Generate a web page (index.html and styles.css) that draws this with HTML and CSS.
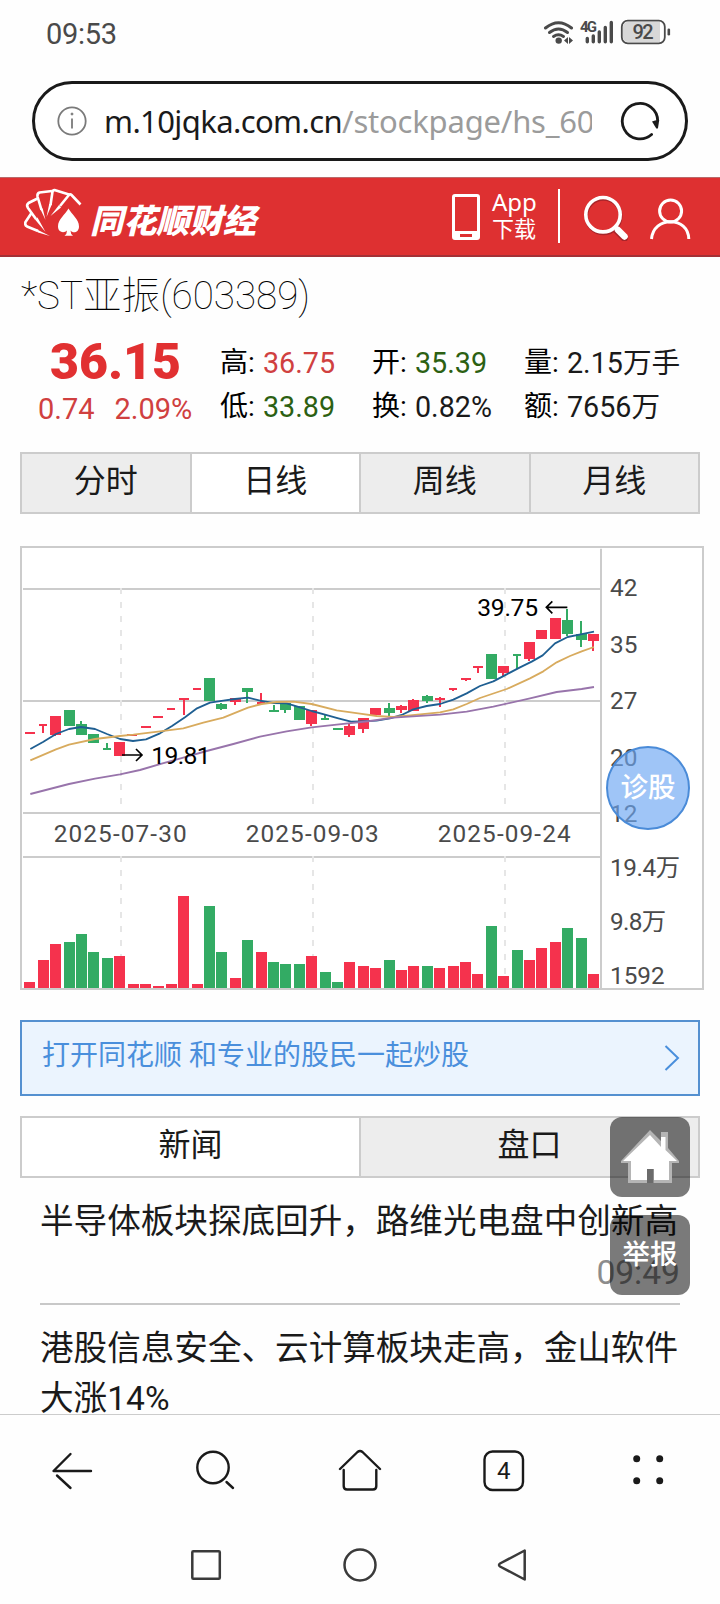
FILE: index.html
```html
<!DOCTYPE html>
<html lang="zh-CN">
<head>
<meta charset="utf-8">
<title>*ST亚振(603389)</title>
<link rel="stylesheet" href="styles.css">
</head>
<body>
<div class="phone">
  <div class="status">
    <span class="clock">09:53</span>
    <svg class="status-icons" width="130" height="28" viewBox="542 18 130 28">
      <g fill="none" stroke="#4a4a4a" stroke-width="3" stroke-linecap="round">
        <path d="M545.5 28Q558.500 17.500 571.500 28"/>
        <path d="M549.500 32.500Q558.500 25.500 567.500 32.500"/>
        <path d="M553.500 36.500Q558.500 33 563.500 36.500"/>
      </g>
      <circle cx="558.700" cy="40.600" r="3.200" fill="#4a4a4a"/>
      <path d="M564 40.500l4-3.500v7zM573 40.500l-4-3.500v7z" fill="#4a4a4a"/>
      <text x="580" y="32" class="net" textLength="17">4G</text>
      <g stroke="#4a4a4a" stroke-width="3.400" stroke-linecap="round">
        <path d="M587.300 38.500v3.300M593.300 36v5.800M599.300 32v9.800M605.300 27.500v14.300M611.300 22.500v19.300"/>
      </g>
      <rect x="621.800" y="20.700" width="43" height="22.600" rx="6" fill="#fff" stroke="#4a4a4a" stroke-width="1.800"/>
      <path d="M628 22h32v20h-32q-5 0-5-5V27q0-5 5-5z" fill="#d8d8d8"/>
      <rect x="667.500" y="28.500" width="2.600" height="7" rx="1.300" fill="#4a4a4a"/>
      <text x="632.500" y="39.300" class="battery" textLength="21">92</text>
    </svg>
  </div>

  <div class="address">
    <svg width="30" height="30" viewBox="0 0 30 30" fill="none" stroke="#7a7a7a" stroke-width="1.800">
      <circle cx="15" cy="15" r="13.700"/><path d="M15 12.500v10"/><circle cx="15" cy="8" r="1" fill="#7a7a7a" stroke-width="1"/>
    </svg>
    <div class="url">m.10jqka.com.cn<span>/stockpage/hs_603389</span></div>
    <svg class="reload" width="42" height="42" viewBox="0 0 42 42">
      <path d="M32.600 34.500A17.700 17.700 0 1 1 38.700 21" fill="none" stroke="#1a1a1a" stroke-width="2.800" stroke-linecap="round"/>
      <path d="M33 21.500q4-2 7.200-1.500l-1.200 8q-1 1.500-2 0z" fill="#1a1a1a"/>
    </svg>
  </div>

  <header class="site">
    <svg class="cards" width="58" height="50" viewBox="24 188 58 50">
      <g fill="none" stroke="#fff" stroke-width="2.600" stroke-linejoin="round">
        <path d="M31.500 213L25.500 222Q24.500 225 27 226.500L38 231"/>
        <path d="M37.500 198.500L28.500 203Q26 205 28 208L36 219"/>
        <path d="M52 191L39.500 192.500Q37 193.500 37.500 196.500L41.500 210"/>
        <path d="M69 194.500L54.500 190Q52.500 190 52.300 193L50.500 205"/>
        <path d="M80.500 204.500L71.500 195Q70 193.500 68.500 195.500L60 206"/>
      </g>
      <path d="M36 229L50 236L38 232.500zM35 219.500L45.500 232L37.500 217.500zM40.300 209L45.500 220L42.700 208.500zM49.200 204L46.500 217L52 204zM59 205L50.500 216L61 207.500z" fill="#fff"/>
      <path d="M68.500 208.500C72 215 79 219 79 226.500C79 233 72.500 233.500 70.500 230.500Q70.500 234 73 235.800H64.500Q67 234 67 230.500C64 233.500 58 232.500 58 226.500C58 219 65 215 68.500 208.500z" fill="#fff"/>
    </svg>
    <span class="brand">同花顺财经</span>
    <svg class="mobile" width="28" height="46" viewBox="0 0 28 46">
      <path fill="#fff" fill-rule="evenodd" d="M3 0h22q3 0 3 3v40q0 3-3 3H3q-3 0-3-3V3q0-3 3-3zM3 3v34h22V3zM8 40v3h12v-3z"/>
    </svg>
    <div class="download"><span class="app">App</span><span>下载</span></div>
    <i class="split"></i>
    <svg class="find" width="46" height="46" viewBox="583 195 46 46">
      <g fill="none" stroke="#a8252a" transform="translate(.5 1.200)"><circle cx="603" cy="215" r="17.200" stroke-width="3.600"/><path d="M616 229l8 8" stroke-width="7" stroke-linecap="round"/></g>
      <g fill="none" stroke="#fff"><circle cx="603" cy="214.700" r="17.200" stroke-width="3.600"/><path d="M614.500 226l4 4" stroke-width="4"/><path d="M618 230l6.500 6.500" stroke-width="6.500" stroke-linecap="round"/></g>
    </svg>
    <svg class="user" width="42" height="42" viewBox="650 198 42 42" fill="none" stroke="#fff" stroke-width="3">
      <circle cx="670.600" cy="211" r="11"/><path d="M651.500 239C652.500 227.500 661 221.700 670.600 221.700S688.500 227.500 688.800 239"/>
    </svg>
  </header>

  <main class="page">
    <h1 class="stock">*ST亚振(603389)</h1>

    <section class="quote">
      <div class="now">
        <strong>36.15</strong>
        <div class="change"><span>0.74</span><span>2.09%</span></div>
      </div>
      <dl class="facts">
        <div><dt>高:</dt><dd class="up">36.75</dd></div>
        <div><dt>开:</dt><dd class="down">35.39</dd></div>
        <div><dt>量:</dt><dd>2.15万手</dd></div>
        <div><dt>低:</dt><dd class="down">33.89</dd></div>
        <div><dt>换:</dt><dd>0.82%</dd></div>
        <div><dt>额:</dt><dd>7656万</dd></div>
      </dl>
    </section>

    <nav class="tabs period"><a>分时</a><a class="on">日线</a><a>周线</a><a>月线</a></nav>

    <section class="chart">
      <svg width="684" height="444" viewBox="30 18 2052 1332">
        <g class="grid">
          <rect x="33" y="21" width="2046" height="1326"/>
          <path d="M39 147H1770M39 483H1770M39 819H1770M39 951H1770M1773 26V1344"/>
        </g>
        <path class="dash" d="M333 144V804M909 144V804M1485 144V804M333 948V1340M909 948V1340M1485 948V1340"/>
        <g id="candles"></g>
        <g id="volumes"></g>
        <g class="average">
          <polyline stroke="#1f5f92" points="61,627 99,606 138,582 177,567 213,561 255,567 291,582 330,597 369,603 408,598 450,580 486,558 525,532 561,505 600,488 640,482 675,477 714,473 750,482 790,489 830,490 870,502 905,513 945,524 985,535 1023,545 1050,544 1100,542 1140,535 1175,525 1210,508 1250,498 1290,492 1330,479 1370,460 1410,438 1450,424 1490,403 1530,382 1565,365 1598,346 1635,310 1673,291 1712,283 1752,275"/>
          <polyline stroke="#d8ab5e" points="61,661 138,628 177,614 255,597 330,588 370,584 450,574 520,565 580,548 640,533 714,503 755,492 800,486 850,485 905,492 980,511 1050,521 1100,528 1150,531 1200,526 1290,517 1330,508 1370,492 1410,474 1490,447 1560,415 1600,394 1640,367 1680,348 1715,334 1752,321"/>
          <polyline stroke="#9874ab" points="61,762 177,732 255,716 330,703 390,690 455,671 520,653 590,633 670,612 750,590 830,574 905,562 980,554 1080,543 1150,533 1290,524 1370,515 1450,500 1560,475 1640,456 1715,447 1752,441"/>
        </g>
        <g class="mark">
          <path d="M336 645H395M378 627L396 645L378 663M1672 202H1610M1627 184L1609 202L1627 220"/>
          <text x="424" y="671" textLength="178">19.81</text>
          <text x="1402" y="227" textLength="182">39.75</text>
        </g>
        <g class="label">
          <text x="131" y="905" textLength="399">2025-07-30</text>
          <text x="707" y="905" textLength="399">2025-09-03</text>
          <text x="1283" y="905" textLength="399">2025-09-24</text>
          <text x="1800" y="168">42</text><text x="1800" y="338">35</text><text x="1800" y="507">27</text>
          <text x="1800" y="677">20</text><text x="1800" y="847">12</text>
          <text x="1800" y="1008" textLength="210">19.4万</text><text x="1800" y="1170" textLength="168">9.8万</text><text x="1800" y="1332">1592</text>
        </g>
      </svg>
      <div class="diagnose">诊股</div>
    </section>

    <a class="promo"><span>打开同花顺 和专业的股民一起炒股</span>
      <svg width="16" height="28" viewBox="0 0 16 28" fill="none" stroke="#4a8fdc" stroke-width="2"><path d="M1.500 2L14 14L1.500 26"/></svg>
    </a>

    <nav class="tabs feed"><a class="on">新闻</a><a>盘口</a></nav>

    <ul class="news">
      <li>半导体板块探底回升，路维光电盘中创新高<time>09:49</time></li>
      <li>港股信息安全、云计算板块走高，金山软件大涨14%</li>
    </ul>
  </main>

  <div class="floats">
    <div class="float">
      <svg width="60" height="54" viewBox="0 0 60 54">
        <path fill="#b5b5b5" d="M30 0L41 11V2h7v16L59 31v2h-7v20H8V33H1v-2z"/>
        <path fill="#fff" d="M30 5L41 17V7h4.500v13L57 31h-8v19H34V39h-7v11H11V31H3z"/>
        <path fill="#6b6b6b" d="M27 39h6.500v14H27z"/>
      </svg>
    </div>
    <div class="float"><span>举报</span></div>
  </div>

  <nav class="toolbar">
    <svg width="44" height="44" viewBox="50 1449 44 44"><path d="M70.500 1454L53.500 1471H91M57 1475.500L70.500 1488"/></svg>
    <svg width="44" height="44" viewBox="194 1449 44 44"><circle cx="213" cy="1467.500" r="15.700"/><path d="M226.500 1482L233 1488"/></svg>
    <svg width="46" height="44" viewBox="337 1449 46 44"><path d="M340 1469L357.500 1452Q360 1450 362.500 1452L380 1469M343.700 1470V1486Q343.700 1489.500 347 1489.500H373Q376.300 1489.500 376.300 1486V1470"/></svg>
    <svg width="44" height="44" viewBox="483 1449 44 44"><rect x="484.500" y="1451.500" width="38.500" height="38.500" rx="8"/><text x="497" y="1478.500">4</text></svg>
    <svg width="44" height="44" viewBox="626 1449 44 44"><g class="dots"><circle cx="636.700" cy="1458.700" r="3.500"/><circle cx="659.700" cy="1458.700" r="3.500"/><circle cx="636.700" cy="1480.700" r="3.500"/><circle cx="659.700" cy="1480.700" r="3.500"/></g></svg>
  </nav>
  <nav class="system">
    <svg width="36" height="36" viewBox="188 1547 36 36"><rect x="192.300" y="1551.300" width="27.500" height="27.500" rx="1"/></svg>
    <svg width="36" height="36" viewBox="341 1547 36 36"><circle cx="360" cy="1565" r="15.500"/></svg>
    <svg width="36" height="36" viewBox="494 1547 36 36"><path d="M524.700 1550.500V1579.500L500 1566.500Q498 1565 500 1563.500z"/></svg>
  </nav>
</div>
<script src="chart.js"></script>
</body>
</html>
```

FILE: styles.css
```css
* { box-sizing: border-box; }
body, h1, ul, dl, dd { margin: 0; padding: 0; }
body { background: #fff; color: #1a1a1a; font-family: Roboto, "Noto Sans CJK SC", sans-serif; }
svg { display: block; flex: none; }
.phone { position: relative; width: 720px; height: 1604px; overflow: hidden; background: #fefefe; display: flex; flex-direction: column; }

.status { height: 81px; padding: 18px 48px 0 46px; display: flex; justify-content: space-between; align-items: flex-start; }
.clock { font-size: 29px; line-height: 33px; color: #4a4a4a; letter-spacing: -.3px; }
.net { font-size: 15px; font-weight: 700; fill: #4a4a4a; }
.battery { font-size: 20px; font-weight: 500; fill: #4a4a4a; }

.address { flex: none; width: 656px; height: 80px; margin-left: 32px; border: 3px solid #1a1a1a; border-radius: 40px; background: #fff; padding: 0 24px 0 22px; display: flex; align-items: center; }
.url { width: 488px; margin-left: 17px; overflow: hidden; white-space: nowrap; font: 31px/46px "Noto Sans", sans-serif; letter-spacing: -.6px; }
.url span { color: #9b9b9b; letter-spacing: -.2px; }
.reload { margin-left: 27px; }

.site { flex: none; height: 80px; margin-top: 16px; border-top: 1px solid #b86a6a; border-bottom: 2px solid #a33036; background: #de3031; display: flex; align-items: flex-start; padding-left: 24px; color: #fff; }
.cards { margin-top: 10px; }
.brand { width: 172px; margin: 17px 0 0 8px; font: italic 900 33.200px/48px "Noto Sans CJK SC", sans-serif; white-space: nowrap; }
.mobile { margin: 16px 0 0 190px; }
.download { width: 44px; margin: 10px 0 0 12px; display: flex; flex-direction: column; font-size: 22px; line-height: 27px; }
.app { font: 24px/28px "Noto Sans", sans-serif; }
.split { width: 2px; height: 54px; margin: 11px 0 0 22px; background: #fff; }
.find { margin: 17px 0 0 23px; }
.user { margin: 20px 0 0 21px; }

.page { height: 1157px; overflow: hidden; }
.stock { height: 78px; padding-left: 21px; font: 100 38.600px/78px Roboto, "Noto Sans CJK SC", sans-serif; color: #000; white-space: nowrap; }
.quote { height: 117px; padding-left: 20px; display: flex; }
.now { width: 200px; color: #d04040; }
.now strong { display: block; padding-left: 30px; font-size: 50px; line-height: 54px; font-weight: 900; color: #e13031; }
.change { display: flex; gap: 20px; padding-left: 18px; margin-top: 3px; font-size: 29px; line-height: 34px; }
.facts { display: grid; grid-template-columns: 152px 152px 170px; grid-auto-rows: 44px; font-size: 28.700px; line-height: 44px; padding-top: 6px; }
.facts div { display: flex; white-space: nowrap; }
.facts dt { width: 43px; font-size: 28px; color: #000; }
.up { color: #d04040; }
.down { color: #2c6012; }

.tabs { width: 680px; height: 62px; margin-left: 20px; border: 2px solid #ccc; display: flex; font-size: 32px; line-height: 54px; text-align: center; }
.tabs a { flex: 1; background: #ededed; }
.tabs a + a { border-left: 2px solid #ccc; }
.tabs .on { background: #fff; }

.chart { position: relative; width: 684px; height: 444px; margin: 32px 0 0 20px; background: #fff; }
.grid { fill: none; stroke: #ccc; stroke-width: 6; }
.dash { fill: none; stroke: #e6e6e6; stroke-width: 6; stroke-dasharray: 18 24; }
.average { fill: none; stroke-width: 5.500; stroke-linejoin: round; }
.mark { font-size: 74px; }
.mark path { fill: none; stroke: #000; stroke-width: 5; }
.label { font-size: 73px; fill: #4a4a4a; }
.rise { fill: #f5324d; }
.fall { fill: #33ab64; }
.diagnose { position: absolute; left: 586px; top: 200px; width: 84px; height: 84px; border: 2px solid #4a8bd8; border-radius: 50%; background: rgba(107, 166, 243, .65); color: #fff; font-size: 27.500px; font-weight: 500; line-height: 80px; text-align: center; }

.promo { width: 680px; height: 76px; margin: 30px 0 0 20px; padding: 0 18px 0 20px; border: 2px solid #5490d0; background: #ebf4fe; display: flex; align-items: center; justify-content: space-between; font-size: 28px; color: #4a8fdc; }
.promo span { line-height: 40px; padding-bottom: 4px; }
.feed { margin-top: 20px; }

.news { margin: 19px 40px 0; list-style: none; font-size: 33.600px; line-height: 50px; }
.news li { padding-bottom: 18px; }
.news li:first-child { height: 108px; padding: 0; border-bottom: 2px solid #c8c8c8; white-space: nowrap; }
.news li + li { padding-top: 19px; }
.news time { display: block; text-align: right; color: #8c8c8c; line-height: 51px; }

.floats { position: absolute; left: 610px; top: 1117px; display: grid; gap: 18px; }
.float { width: 80px; height: 80px; border-radius: 12px; background: rgba(0, 0, 0, .52); color: #fff; display: grid; place-items: center; font-size: 27.500px; font-weight: 500; }
.float span { line-height: 32px; padding-bottom: 1px; }

.toolbar { flex: none; height: 113px; border-top: 1px solid #ccc; padding: 34px 50px 0; display: flex; justify-content: space-between; }
.toolbar svg { fill: none; stroke: #1a1a1a; stroke-width: 2.400; stroke-linecap: round; stroke-linejoin: round; }
.toolbar text, .toolbar .dots { fill: #1a1a1a; stroke: none; font-size: 24px; }
.system { flex: none; padding: 20px 190px 0 188px; display: flex; justify-content: space-between; }
.system svg { fill: none; stroke: #3a3a3a; stroke-width: 2.500; stroke-linejoin: round; }
```

FILE: chart.js
```javascript
// Daily bars: left, body top, body bottom, rising, wick top, wick bottom, body width.
const candles = [
  [45,576,582,1,0,0,30],[87,552,558,1,552,579,24],[120,528,585,1,528,588],[162,510,558,0],[198,552,585,0,543,585],
  [234,582,609,0],[279,624,630,0,609,630,24],[312,606,648,1],[351,582,588,1,0,0,30],[393,558,564,1,0,0,30],
  [429,528,534,1,0,0,30],[471,504,510,1,0,0,24],[507,474,480,1,480,525,30],[549,444,450,1,0,0,24],[582,414,483,0],
  [618,492,507,0,489,510],[660,474,486,1,486,495],[696,444,456,0,456,489],[741,486,492,1,459,492,24],
  [777,510,516,0,495,516,30],[810,489,510,0,489,519],[852,498,540,0],[888,510,552,1,510,558],[933,534,540,0,522,540,24],
  [969,564,570,0,0,0,30],[1002,558,585,1,552,591],[1044,534,567,1,534,579],[1080,504,525,1],[1122,504,519,0,489,528],
  [1158,498,510,1,495,519],[1194,480,513,1,477,513],[1236,468,483,0,465,489],[1275,474,480,1,471,501,30],
  [1317,444,450,1,444,453,24],[1353,414,420,1,414,423,30],[1389,378,384,1,378,399,30],[1428,342,417,0],
  [1464,378,399,1,378,408],[1509,342,348,0,342,387,24],[1542,306,357,1,306,363],[1578,270,297,1],[1620,234,297,1],
  [1656,240,282,0,207,288],[1698,282,300,0,243,321],[1734,282,303,1,282,333]
];
// Turnover columns: left, height, rising.
const volumes = [
  [42,18,1],[84,84,1],[120,132,1],[162,138,0],[198,162,0],[234,108,0],[276,90,0],[312,96,1],[354,12,1],[390,12,1],
  [429,6,1],[468,12,1],[504,276,1],[546,12,1],[582,246,0],[618,108,0],[660,30,1],[696,144,0],[738,108,1],[774,78,0],
  [810,72,0],[852,72,0],[888,96,1],[930,48,0],[966,18,0],[1002,78,1],[1044,66,1],[1080,60,1],[1122,84,0],[1158,54,1],
  [1194,66,1],[1236,66,0],[1272,60,1],[1314,66,1],[1350,78,1],[1386,42,1],[1428,186,0],[1464,36,1],[1506,114,0],
  [1542,84,1],[1578,120,1],[1620,138,1],[1656,180,0],[1698,150,0],[1734,42,1]
];
function bar(parent, x, y, w, h, rising) {
  const r = document.createElementNS("http://www.w3.org/2000/svg", "rect");
  r.setAttribute("x", x); r.setAttribute("y", y);
  r.setAttribute("width", w); r.setAttribute("height", h);
  r.setAttribute("class", rising ? "rise" : "fall");
  parent.appendChild(r);
}
const candleLayer = document.getElementById("candles");
for (const [x, top, bottom, rising, high = 0, low = 0, w = 33] of candles) {
  bar(candleLayer, x, top, w, bottom - top, rising);
  if (low > high) bar(candleLayer, x + (w === 24 ? 9 : 12), high, 6, low - high, rising);
}
const volumeLayer = document.getElementById("volumes");
for (const [x, h, rising] of volumes) bar(volumeLayer, x, 1344 - h, 33, h, rising);
```
